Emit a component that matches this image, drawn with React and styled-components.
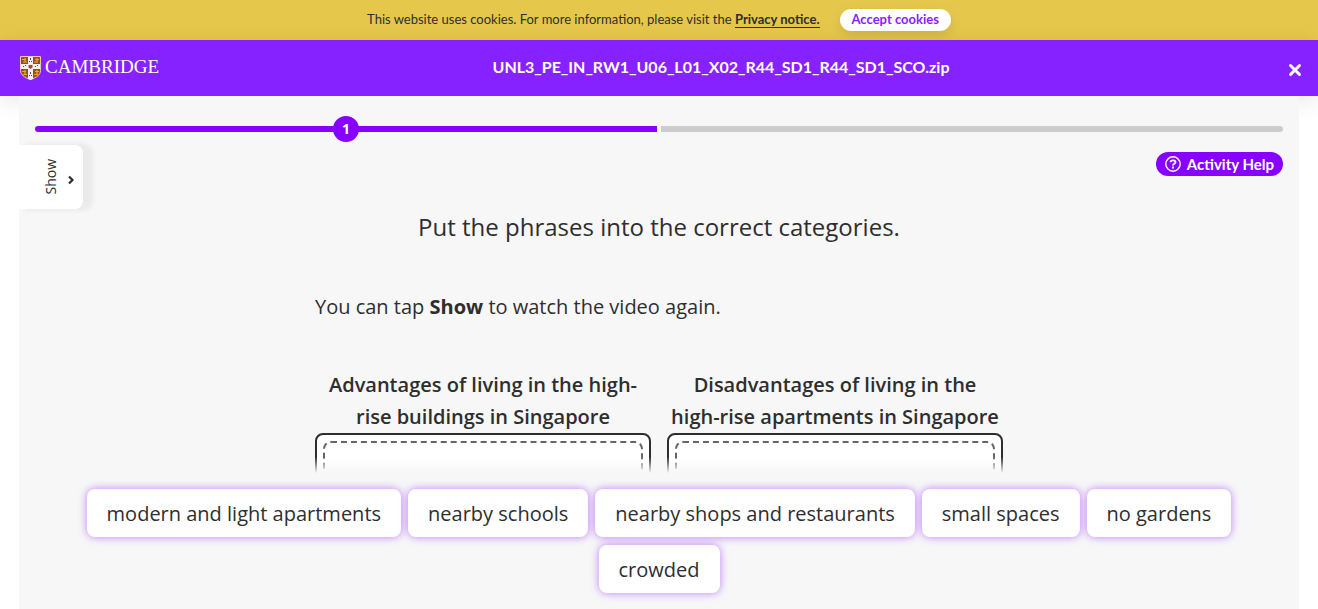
import React from "react";
import styled, { createGlobalStyle } from "styled-components";

const GlobalStyle = createGlobalStyle`
  *, *::before, *::after { box-sizing: border-box; }
  body { margin: 0; background: #fff; color: #2e2e2e; font-family: "Open Sans", "Noto Sans", sans-serif; }
  button { font: inherit; cursor: pointer; border: 0; padding: 0; }
  h1, h2, p { margin: 0; }
`;

const compactFont = `"Lato", "Liberation Sans", sans-serif`;

const Page = styled.div`
  height: 100vh;
  display: flex;
  flex-direction: column;
  overflow: hidden;
`;

const CookieBanner = styled.aside`
  flex: none;
  height: 40px;
  display: flex;
  align-items: center;
  justify-content: center;
  gap: 20px;
  background: #e5c84b;
  font: 400 13px/20px ${compactFont};
`;

const CookieText = styled.p`
  padding-bottom: 2px;
`;

const PrivacyLink = styled.a`
  color: inherit;
  font-weight: 700;
  text-decoration: none;
  border-bottom: 1px solid currentColor;
`;

const AcceptButton = styled.button`
  height: 22px;
  padding: 0 12px 2px;
  border-radius: 11px;
  background: #fff;
  color: #8622ff;
  font-weight: 700;
  box-shadow: 0 4px 12px rgba(0, 0, 0, 0.1);
`;

const Header = styled.header`
  flex: none;
  height: 56px;
  display: grid;
  grid-template-columns: 160px 1fr 40px;
  align-items: center;
  padding: 0 16px 0 20px;
  background: #8622ff;
  color: #fff;
  box-shadow: 0 4px 24px rgba(0, 0, 0, 0.1);
`;

const Brand = styled.a`
  display: flex;
  align-items: center;
  gap: 4px;
  color: inherit;
  text-decoration: none;
  font: 400 19px/24px "Liberation Serif", serif;
`;

const BrandName = styled.span`
  padding-bottom: 2px;
`;

const PackageName = styled.h1`
  padding-bottom: 2px;
  text-align: center;
  font: 700 16px/24px ${compactFont};
`;

const CloseButton = styled.button`
  justify-self: end;
  display: flex;
  padding-top: 4px;
  background: none;
  color: inherit;
`;

const Stage = styled.main`
  position: relative;
  flex: 1;
  min-height: 0;
  display: flex;
  flex-direction: column;
  margin: 0 19px;
  background: #f7f7f7;
`;

const Scroller = styled.section`
  flex: 1;
  min-height: 0;
  overflow: hidden;
  padding: 20px 16px 0;
`;

const Progress = styled.ol`
  display: flex;
  gap: 4px;
  height: 26px;
  margin: 0;
  padding: 0;
  list-style: none;
`;

const Step = styled.li`
  flex: 1;
  display: flex;
  align-items: center;
  &::before,
  &::after {
    content: "";
    flex: 1;
    height: 6px;
    background: ${(p) => (p.$active ? "#8800ff" : "#cccccc")};
  }
  &:first-child::before { border-radius: 3px 0 0 3px; }
  &:last-child::after { border-radius: 0 3px 3px 0; }
`;

const StepNumber = styled.span`
  width: 26px;
  height: 26px;
  margin: 0 -1px;
  border-radius: 50%;
  background: #8800ff;
  color: #fff;
  text-align: center;
  font: 700 14px/26px "Open Sans", sans-serif;
`;

const Tools = styled.div`
  display: flex;
  justify-content: space-between;
  align-items: flex-start;
  margin: 3px 0 0 -16px;
`;

const ShowTab = styled.button`
  display: flex;
  align-items: center;
  justify-content: flex-end;
  gap: 6px;
  width: 64px;
  height: 64px;
  padding-right: 8px;
  border-radius: 0 8px 8px 0;
  background: #fff;
  color: #2e2e2e;
  box-shadow: 8px 0 4px 2px rgba(0, 0, 0, 0.05);
`;

const TabLabel = styled.span`
  writing-mode: vertical-rl;
  transform: rotate(180deg);
  font-size: 14px;
  line-height: 20px;
`;

const TabArrow = styled.svg`
  margin-top: 6px;
`;

const HelpButton = styled.button`
  display: flex;
  align-items: center;
  gap: 6px;
  height: 24px;
  margin-top: 7px;
  padding: 0 9px;
  border-radius: 12px;
  background: #8800ff;
  color: #fff;
  font: 700 15px/24px ${compactFont};
`;

const Rubric = styled.h2`
  margin-top: 2px;
  text-align: center;
  font-size: 24px;
  font-weight: 400;
  line-height: 32px;
`;

const Exercise = styled.div`
  max-width: 688px;
  margin: 48px auto 0;
  font-size: 20px;
  line-height: 32px;
`;

const Categories = styled.div`
  display: grid;
  grid-template-columns: 1fr 1fr;
  gap: 16px;
  margin-top: 46px;
`;

const CategoryTitle = styled.h2`
  text-align: center;
  font-size: 20px;
  font-weight: 600;
  line-height: 32px;
`;

const DropBox = styled.div`
  height: 320px;
  padding: 6px;
  border: 2px solid #2e2e2e;
  border-radius: 8px;
  background: #fff;
`;

const DropTarget = styled.div`
  height: 100%;
  border: 2px dashed #666;
  border-radius: 8px;
`;

const Tray = styled.footer`
  position: relative;
  flex: none;
  display: flex;
  flex-wrap: wrap;
  justify-content: center;
  gap: 8px 7px;
  padding: 16px 48px;
  background: #f7f7f7;
  &::before {
    content: "";
    position: absolute;
    inset: -16px 0 auto;
    height: 16px;
    background: linear-gradient(rgba(247, 247, 247, 0), #f7f7f7);
  }
`;

const Chip = styled.button`
  height: 48px;
  padding: 2px 20px 0;
  border-radius: 8px;
  background: #fff;
  color: #2e2e2e;
  font-size: 20px;
  line-height: 32px;
  box-shadow: 0 0 8px rgba(136, 0, 255, 0.5);
`;

const phrases = [
  "modern and light apartments",
  "nearby schools",
  "nearby shops and restaurants",
  "small spaces",
  "no gardens",
  "crowded",
];

const categories = [
  "Advantages of living in the high-rise buildings in Singapore",
  "Disadvantages of living in the high-rise apartments in Singapore",
];

const Crest = () => (
  <svg width="21" height="24" viewBox="0 0 21 24" aria-hidden="true">
    <path d="M.5.5h20v14c0 4.500-4 7-10 9-6-2-10-4.500-10-9z" fill="#9c4a22" stroke="#ecc9b0" />
    <path d="M8 1h5v22l-2.500 1L8 23zM1 8h19v5H1z" fill="#f5eeee" />
    <g fill="none" stroke="#e0b020" strokeWidth="1.200">
      <path d="M2 3.500h4M3 6h4M5 2v4M15 3.500h4M14 6h4M17 2v4M2 15.500h4M3 18.500h4M5 14v5M15 15.500h4M14 18.500h4M17 14v5" />
    </g>
    <g fill="#4d4242">
      <path d="M10 2h1v2h-1zM9 5h1v1H9zM11 5h1v1h-1zM3 10h1v1H3zM5 9h1v1H5zM15 10h1v1h-1zM17 9h1v1h-1zM10 16h1v2h-1zM9 19h1v1H9zM11 19h1v1h-1z" />
    </g>
    <path d="M8.500 9h4v2.500l-2 1.500-2-1.500z" fill="#c33b2b" />
  </svg>
);

export default function App() {
  return (
    <Page>
      <GlobalStyle />
      <CookieBanner>
        <CookieText>
          This website uses cookies. For more information, please visit the{" "}
          <PrivacyLink href="#privacy">Privacy notice.</PrivacyLink>
        </CookieText>
        <AcceptButton type="button">Accept cookies</AcceptButton>
      </CookieBanner>
      <Header>
        <Brand href="#home">
          <Crest />
          <BrandName>CAMBRIDGE</BrandName>
        </Brand>
        <PackageName>UNL3_PE_IN_RW1_U06_L01_X02_R44_SD1_R44_SD1_SCO.zip</PackageName>
        <CloseButton type="button" aria-label="Close">
          <svg width="14" height="14" viewBox="0 0 14 14" stroke="currentColor" strokeWidth="3" strokeLinecap="round">
            <path d="M2.500 2.500l9 9M11.500 2.500l-9 9" />
          </svg>
        </CloseButton>
      </Header>
      <Stage>
        <Scroller>
          <Progress>
            <Step $active>
              <StepNumber>1</StepNumber>
            </Step>
            <Step />
          </Progress>
          <Tools>
            <ShowTab type="button">
              <TabLabel>Show</TabLabel>
              <TabArrow width="8" height="10" viewBox="0 0 8 10" fill="none" stroke="currentColor" strokeWidth="2.200" aria-hidden="true">
                <path d="M2 1.500L5.500 5 2 8.500" />
              </TabArrow>
            </ShowTab>
            <HelpButton type="button">
              <svg width="16" height="16" viewBox="0 0 16 16" fill="none" stroke="currentColor" aria-hidden="true">
                <circle cx="8" cy="8" r="7.200" strokeWidth="1.400" />
                <path d="M5.500 6.200C5.700 3.800 10.500 3.800 10.500 6.300 10.500 7.900 8 7.600 8 9.400" strokeWidth="1.800" />
                <path d="M8 10.500v1.900" strokeWidth="2" />
              </svg>
              Activity Help
            </HelpButton>
          </Tools>
          <Rubric>Put the phrases into the correct categories.</Rubric>
          <Exercise>
            <p>
              You can tap <b>Show</b> to watch the video again.
            </p>
            <Categories>
              {categories.map((title) => (
                <section key={title}>
                  <CategoryTitle>{title}</CategoryTitle>
                  <DropBox>
                    <DropTarget />
                  </DropBox>
                </section>
              ))}
            </Categories>
          </Exercise>
        </Scroller>
        <Tray>
          {phrases.map((phrase) => (
            <Chip type="button" key={phrase}>
              {phrase}
            </Chip>
          ))}
        </Tray>
      </Stage>
    </Page>
  );
}
